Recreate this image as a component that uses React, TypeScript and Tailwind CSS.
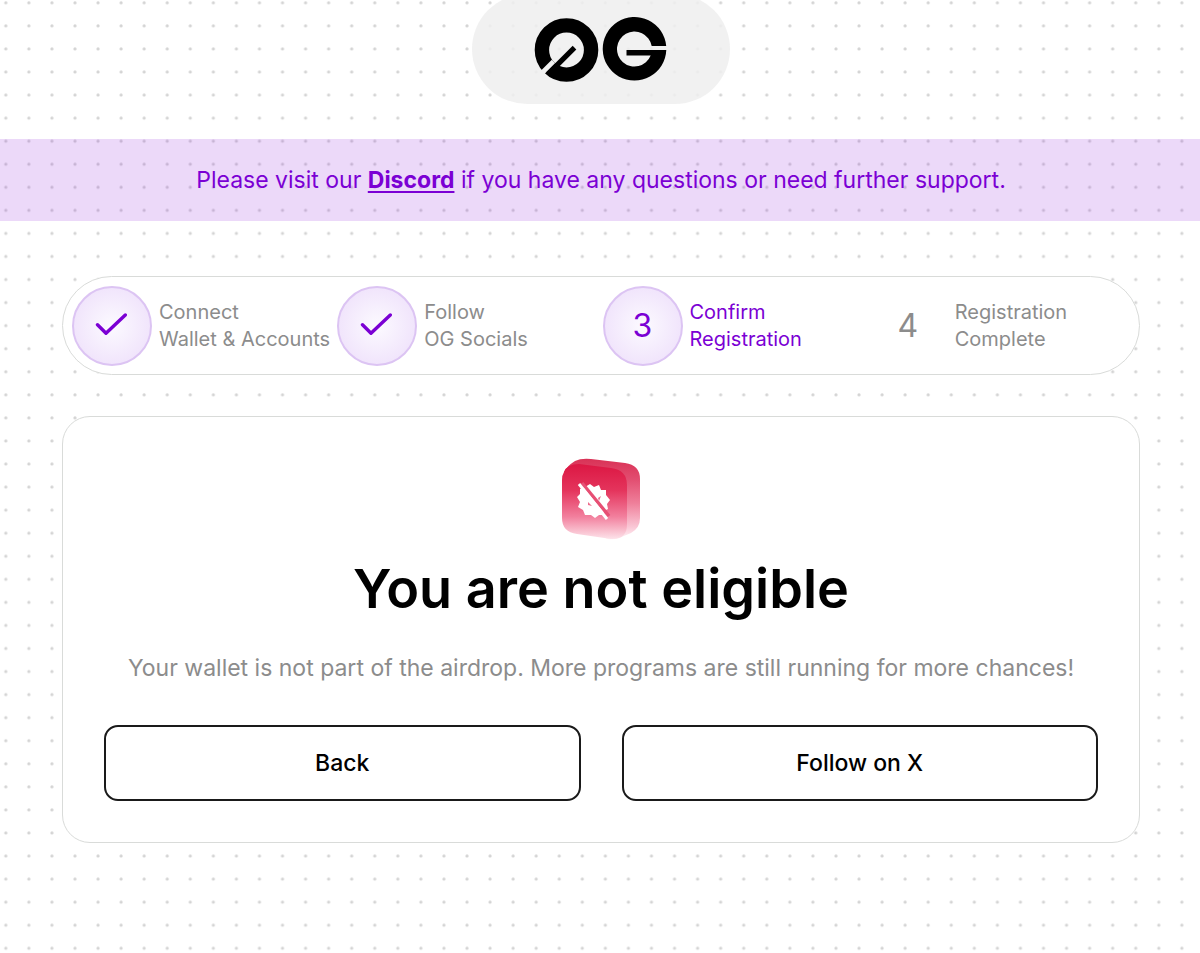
import React, { FC } from "react";

interface Step {
  lines: [string, string];
  state: "done" | "current" | "upcoming";
}

const steps: Step[] = [
  { lines: ["Connect", "Wallet & Accounts"], state: "done" },
  { lines: ["Follow", "OG Socials"], state: "done" },
  { lines: ["Confirm", "Registration"], state: "current" },
  { lines: ["Registration", "Complete"], state: "upcoming" },
];

const DotGrid: FC = () => (
  <svg className="absolute inset-0 -z-10 h-full w-full" aria-hidden="true">
    <defs>
      <pattern
        id="dots"
        width="23.06"
        height="23.06"
        patternUnits="userSpaceOnUse"
      >
        <circle cx="5.8" cy="2.8" r="1.6" fill="#d4d4d4" />
      </pattern>
    </defs>
    <rect width="100%" height="100%" fill="url(#dots)" />
  </svg>
);

const Logo: FC = () => (
  <svg
    width="134"
    height="66"
    viewBox="-1.5 0 134 66"
    fill="none"
    role="img"
    aria-label="0G"
  >
    {/* slashed zero */}
    <circle cx="31" cy="34" r="24.6" stroke="#000" strokeWidth="14.4" />
    <path d="M4 59.5 L18 45.5" stroke="#f1f1f1" strokeWidth="4.8" />
    <path d="M12.5 58.2 L39 31.7" stroke="#000" strokeWidth="5.2" />
    {/* G with the horizontal cut */}
    <path
      d="M130.7 30 A31.8 31.8 0 1 0 130.8 34 H91 V39.6 H115.2 A17.5 17.5 0 1 1 116.2 30 Z"
      fill="#000"
    />
  </svg>
);

const IneligibleIcon: FC = () => (
  <svg
    width="80"
    height="84"
    viewBox="0 0 80 84"
    fill="none"
    aria-hidden="true"
  >
    <defs>
      <linearGradient id="side" x1="0" y1="0" x2="0" y2="1">
        <stop offset="0" stopColor="#d93256" />
        <stop offset="0.25" stopColor="#e24d70" />
        <stop offset="0.55" stopColor="#ef7f9a" />
        <stop offset="0.85" stopColor="#fac8d6" />
        <stop offset="1" stopColor="#fff3f6" />
      </linearGradient>
      <linearGradient id="front" x1="0" y1="0" x2="0" y2="1">
        <stop offset="0" stopColor="#dc1743" />
        <stop offset="0.35" stopColor="#e4345c" />
        <stop offset="0.7" stopColor="#f27f9d" />
        <stop offset="1" stopColor="#fde3ea" />
      </linearGradient>
    </defs>
    <path
      d="M3 14 Q6 8 14 3 Q20 0 30 1 L64 5 Q79 7 79 21 V60 Q79 70 70 75 L58 80 Q54 82 46 81 L20 60 Z"
      fill="url(#side)"
    />
    <path
      d="M3 14 Q6 6 18 6 L50 10 Q66 12 66 27 V66 Q66 82 50 81 L16 76 Q1 74 1 60 V22 Q1 17 3 14 Z"
      fill="url(#front)"
    />
    <path
      d="M24 29 L29 26 L33 29 L38 27 L40 32 L45 32 L45 37 L49 42 L46 46 L47 51 L43 53 L42 57 L38 57 L34 60 L30 57 L24 57 L22 52 L17 49 L19 44 L16 39 L19 36 L19 31 Z"
      fill="#fff"
    />
    <path d="M21 25 L48 58" stroke="#e74f74" strokeWidth="3.4" />
    <path d="M18 26 L46 61" stroke="#fff" strokeWidth="3" />
    <path
      d="M37 40 L40 38 L38 43 Z M27 44 L31 48 L27 47 Z"
      fill="#ee6c8c"
    />
  </svg>
);

const StepItem: FC<{ step: Step; number: number }> = ({ step, number }) => {
  const active = step.state !== "upcoming";

  return (
    <li
      aria-current={step.state === "current" ? "step" : undefined}
      className="flex flex-1 items-center gap-[7px]"
    >
      <span
        className={
          active
            ? "flex size-20 shrink-0 items-center justify-center rounded-full border-2 border-[#dcc4f3] bg-[radial-gradient(circle,#fcfaff_0%,#ecdcfa_100%)] text-[32px] text-[#7b00d4]"
            : "flex size-20 shrink-0 items-center justify-center text-[32px] text-[#8c8c8c]"
        }
      >
        {step.state === "done" ? (
          <svg
            width="34"
            height="26"
            viewBox="0 0 34 26"
            fill="none"
            aria-label="Completed"
          >
            <path
              d="M2.5 11.7 L11 20.3 L30.3 2"
              stroke="currentColor"
              strokeWidth="3.4"
              strokeLinecap="round"
              strokeLinejoin="round"
            />
          </svg>
        ) : (
          number
        )}
      </span>
      <span
        className={
          step.state === "current"
            ? "text-[20px] leading-[27px] whitespace-nowrap text-[#7b00d4]"
            : "text-[20px] leading-[27px] whitespace-nowrap text-[#8c8c8c]"
        }
      >
        {step.lines[0]}
        <br />
        {step.lines[1]}
      </span>
    </li>
  );
};

const App: FC = () => {
  return (
    <div className="relative isolate min-h-screen bg-white font-['Inter','Liberation_Sans',sans-serif] text-black">
      <DotGrid />

      <header className="flex h-[104px] items-end justify-center overflow-hidden pl-0.5">
        <div className="flex h-[110px] w-[258px] shrink-0 items-center justify-center rounded-full bg-[#efefef]/85">
          <Logo />
        </div>
      </header>

      <div className="mt-[35px] bg-[#8000d4]/15 py-6 pr-6 pl-[26px] text-center text-[23px] leading-[34px] text-[#7b00d4]">
        Please visit our{" "}
        <a href="#discord" className="font-bold underline underline-offset-3">
          Discord
        </a>{" "}
        if you have any questions or need further support.
      </div>

      <main className="pt-[55px] pr-[60px] pb-[110px] pl-[62px]">
        <ol className="flex rounded-full border border-[#d9dbd9] bg-white pt-[9px] pr-1.5 pb-2 pl-[9px]">
          {steps.map((step, i) => (
            <StepItem key={i} step={step} number={i + 1} />
          ))}
        </ol>

        <section className="mt-[41px] flex flex-col items-center rounded-[28px] border border-[#d9dbd9] bg-white px-[41px] py-[41px] text-center">
          <IneligibleIcon />
          <h1 className="mt-[15px] text-[54px] leading-[64px] font-semibold">
            You are not eligible
          </h1>
          <p className="mt-[31px] text-[23px] leading-[32px] text-[#8c8c8c]">
            Your wallet is not part of the airdrop. More programs are still
            running for more chances!
          </p>
          <div className="mt-[41px] grid w-full grid-cols-2 gap-[41px]">
            <button
              type="button"
              className="h-[76px] rounded-[14px] border-2 border-[#1a1a1a] bg-white text-[23px] font-medium"
            >
              Back
            </button>
            <button
              type="button"
              className="h-[76px] rounded-[14px] border-2 border-[#1a1a1a] bg-white text-[23px] font-medium"
            >
              Follow on X
            </button>
          </div>
        </section>
      </main>
    </div>
  );
};

export default App;
